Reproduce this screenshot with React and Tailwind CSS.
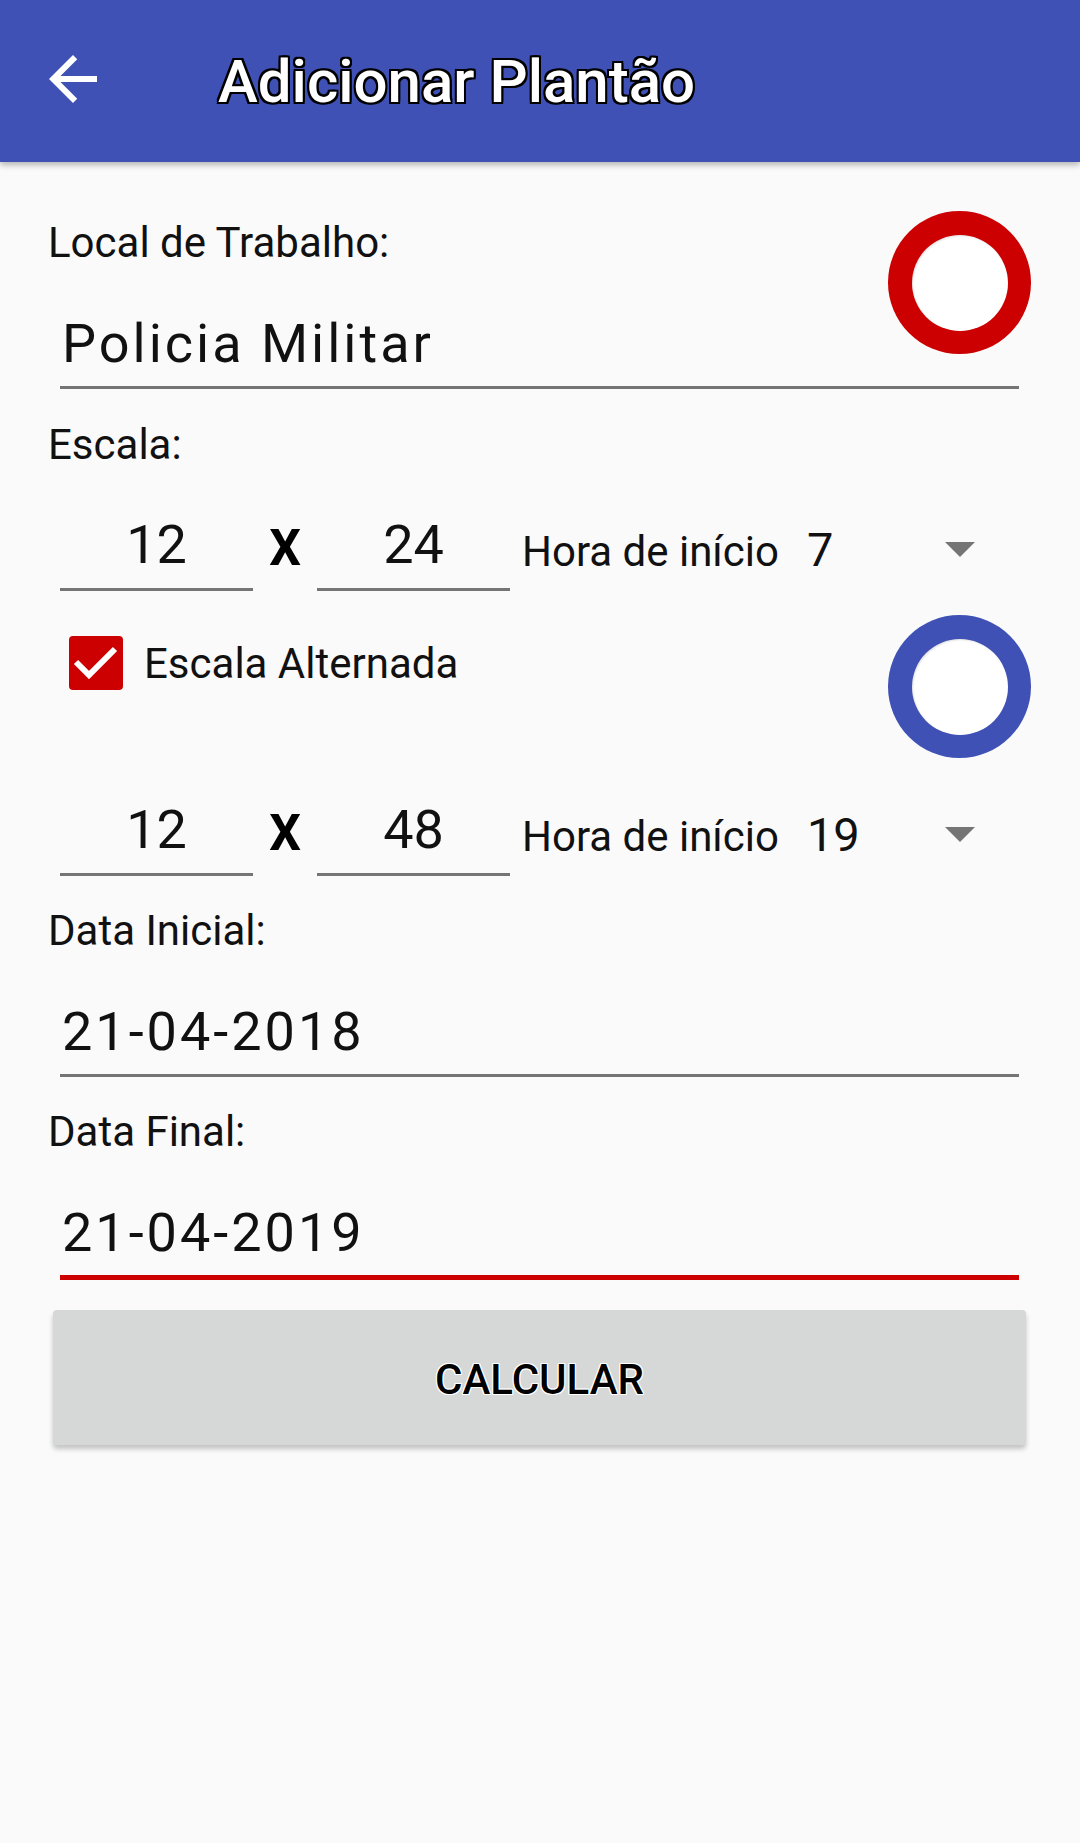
import React from 'react';

function BackArrow() {
  return (
    <svg width="72" height="72" viewBox="0 0 24 24" className="mt-[43px] ml-[37px] shrink-0">
      <path fill="#ffffff" d="M20 11H7.83l5.59-5.59L12 4l-8 8 8 8 1.41-1.41L7.83 13H20v-2z" />
    </svg>
  );
}

function Ring({ color }) {
  return (
    <div className={`w-[143px] h-[143px] rounded-full flex items-center justify-center shrink-0 ${color}`}>
      <div className="w-[96px] h-[96px] rounded-full bg-white shadow-[inset_1px_1px_2px_rgba(0,0,0,0.12)]" />
    </div>
  );
}

function Label({ children, className = '' }) {
  return <div className={`pl-[48px] text-[42px] leading-[50px] text-[#111] ${className}`}>{children}</div>;
}

function DateField({ value, line = 'border-b-[3px] border-[#757575]' }) {
  return (
    <div className={`mt-[44px] ml-[60px] mr-[61px] pl-[2px] pb-[10px] text-[54px] leading-[64px] tracking-[3px] text-[#111] ${line}`}>
      {value}
    </div>
  );
}

function NumField({ value }) {
  return (
    <div className="w-[193px] shrink-0 pb-[11px] border-b-[3px] border-[#757575] text-center text-[54px] leading-[64px] text-[#111]">
      {value}
    </div>
  );
}

function ScaleRow({ a, b, hour, className }) {
  return (
    <div className={`flex items-start pl-[60px] pr-[105px] ${className}`}>
      <NumField value={a} />
      <div className="w-[64px] shrink-0 mt-[7px] text-center text-[50px] leading-[56px] font-bold text-black">X</div>
      <NumField value={b} />
      <div className="flex-1 flex items-start ml-[12px] mt-[12px]">
        <div className="text-[42px] leading-[50px] text-[#111] whitespace-nowrap">
          Hora de início
          <span className="ml-[28px] text-[47px]">{hour}</span>
        </div>
        <svg width="30" height="15" viewBox="0 0 30 15" className="ml-auto mt-[17px]">
          <path d="M0 0H30L15 15Z" fill="#757575" />
        </svg>
      </div>
    </div>
  );
}

export default function App() {
  return (
    <div className="min-h-[1843px] bg-[#fafafa] font-['Roboto',sans-serif]">
      {/* Toolbar */}
      <div className="relative z-10 h-[162px] bg-[#3f51b5] flex items-start shadow-[0_3px_6px_rgba(0,0,0,0.28)]">
        <BackArrow />
        <h1 className="ml-[109px] mt-[47px] text-[60px] leading-[70px] font-medium text-white [text-shadow:2px_0_0_#000,-2px_0_0_#000,0_2px_0_#000,0_-2px_0_#000,2px_2px_0_#000,-2px_2px_0_#000,2px_-2px_0_#000,-2px_-2px_0_#000]">
          Adicionar Plantão
        </h1>
      </div>

      {/* Local de Trabalho */}
      <div className="flex items-start pt-[49px] pr-[49px]">
        <Label className="flex-1 mt-[7px]">Local de Trabalho:</Label>
        <div className="mb-[-86px]">
          <Ring color="bg-[#cc0000]" />
        </div>
      </div>
      <div className="mt-[44px] ml-[60px] mr-[61px] pl-[2px] pb-[10px] border-b-[3px] border-[#757575] text-[54px] leading-[64px] tracking-[3px] text-[#111]">
        Policia Militar
      </div>

      {/* Escala */}
      <Label className="mt-[31px]">Escala:</Label>
      <ScaleRow a="12" b="24" hour="7" className="pt-[43px]" />

      <div className="flex items-start pl-[69px] pr-[49px]">
        <div className="mt-[45px] w-[54px] h-[54px] rounded-[4px] bg-[#cc0000] shrink-0 flex items-center justify-center">
          <svg width="54" height="54" viewBox="0 0 54 54">
            <path d="M7 37L20 50L46 24" transform="translate(0 -11)" fill="none" stroke="#fff" strokeWidth="6" />
          </svg>
        </div>
        <div className="ml-[21px] mt-[48px] text-[42px] leading-[50px] text-[#111]">Escala Alternada</div>
        <div className="ml-auto mt-[24px]">
          <Ring color="bg-[#3f51b5]" />
        </div>
      </div>

      <ScaleRow a="12" b="48" hour="19" className="pt-[40px]" />

      {/* Datas */}
      <Label className="mt-[30px]">Data Inicial:</Label>
      <DateField value="21-04-2018" />
      <Label className="mt-[30px]">Data Final:</Label>
      <DateField value="21-04-2019" line="border-b-[5px] border-[#cc0000]" />

      <div className="mt-[30px] ml-[53px] mr-[54px] h-[135px] pt-[4px] rounded-[4px] bg-[#d6d7d7] shadow-[0_4px_5px_rgba(0,0,0,0.22)] flex items-center justify-center">
        <span className="text-[42px] font-medium text-black [text-shadow:1px_0_0_#fff,-1px_0_0_#fff,0_1px_0_#fff,0_-1px_0_#fff,1px_1px_0_#fff,-1px_1px_0_#fff,1px_-1px_0_#fff,-1px_-1px_0_#fff]">
          CALCULAR
        </span>
      </div>
    </div>
  );
}
